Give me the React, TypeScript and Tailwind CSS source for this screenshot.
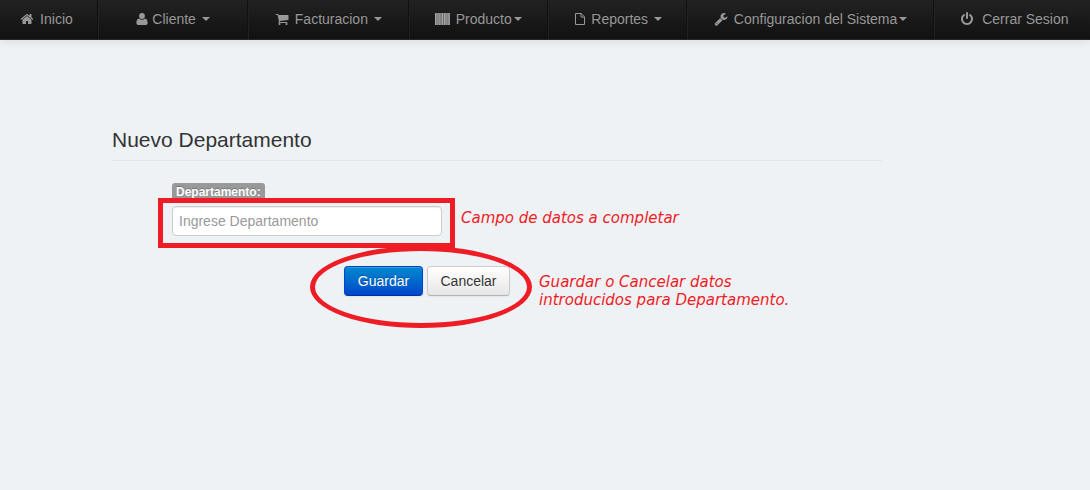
import type { ReactNode } from "react";

const paths = {
  home: "M1472 992v480q0 26-19 45t-45 19h-384v-384h-256v384h-384q-26 0-45-19t-19-45v-480q0-1 .5-3t.5-3l575-474 575 474q1 2 1 6zm223-69l-62 74q-8 9-21 11h-3q-13 0-21-7l-692-577-692 577q-12 8-24 7-13-2-21-11l-62-74q-8-10-7-23.5t11-21.5l719-599q32-26 76-26t76 26l244 204v-195q0-14 9-23t23-9h192q14 0 23 9t9 23v408l219 182q10 8 11 21.5t-7 23.5z",
  cart: "M704 1536q0 52-38 90t-90 38-90-38-38-90 38-90 90-38 90 38 38 90zm896 0q0 52-38 90t-90 38-90-38-38-90 38-90 90-38 90 38 38 90zm128-1088v512q0 24-16.5 42.5t-40.5 21.5l-1044 122q13 60 13 70 0 16-24 64h920q26 0 45 19t19 45-19 45-45 19h-1024q-26 0-45-19t-19-45q0-11 8-31.5t16-36 21.5-40 15.5-29.5l-177-823h-204q-26 0-45-19t-19-45 19-45 45-19h256q16 0 28.5 6.5t19.5 15.5 13 24.5 8 26 5.5 29.5 4.5 26h1201q26 0 45 19t19 45z",
  wrench: "M448 1472q0-26-19-45t-45-19-45 19-19 45 19 45 45 19 45-19 19-45zm644-420l-682 682q-37 37-90 37-52 0-91-37l-106-108q-38-36-38-90 0-53 38-91l681-681q39 98 114.5 173.5t173.5 114.5zm634-435q0 39-23 106-47 134-164.5 217.5t-258.5 83.5q-185 0-316.5-131.5t-131.5-316.5 131.5-316.5 316.5-131.5q58 0 121.5 16.5t107.5 46.5q16 11 16 28t-16 28l-293 169v224l193 107q5-3 79-48.5t135.5-81 70.5-35.5q15 0 23.5 10t8.5 25z",
  power: "M1664 896q0 156-61 298t-164 245-245 164-298 61-298-61-245-164-164-245-61-298q0-182 80.5-343t226.5-270q43-32 95.5-25t83.5 50q32 42 24.5 94.5t-49.5 84.5q-98 74-151.5 181t-53.5 228q0 104 40.5 198.5t109.5 163.5 163.5 109.5 198.5 40.5 198.5-40.5 163.5-109.5 109.5-163.5 40.5-198.5q0-121-53.5-228t-151.5-181q-42-32-49.5-84.5t24.5-94.5q31-43 84-50t95 25q146 109 226.5 270t80.5 343zm-640-768v640q0 52-38 90t-90 38-90-38-38-90v-640q0-52 38-90t90-38 90 38 38 90z",
};

function Glyph({ name }: { name: keyof typeof paths }) {
  return (
    <svg viewBox="0 0 1792 1792" className="size-[14px] shrink-0" fill="currentColor" aria-hidden="true">
      <path d={paths[name]} />
    </svg>
  );
}

function User() {
  return (
    <svg viewBox="0 0 12 12" className="size-3 shrink-0" fill="currentColor" aria-hidden="true">
      <ellipse cx="6" cy="3" rx="2.9" ry="3" />
      <path d="M3.1 5.5Q4.3 6.8 6 6.8t2.9-1.3c1.9.2 2.7 1.9 2.7 4.6 0 1.2-.7 1.9-1.8 1.9H2.2C1.1 12 .4 11.300.4 10.100c0-2.700.8-4.400 2.700-4.600z" />
    </svg>
  );
}

function Barcode() {
  return (
    <svg viewBox="0 0 15 12" className="h-3 w-[15px] shrink-0" aria-hidden="true">
      <rect width="15" height="12" fill="#6a6a6a" />
      <path
        fill="#a3a3a3"
        d="M0 0h1v12H0zM1.500 0h1v12h-1zM3.500 0h1.200v12H3.500zM5.600 0h.7v12h-.7zM7 0h1v12H7zM9 0h1.500v12H9zM11.400 0h1v12h-1zM13 0h.6v12H13zM14.200 0h.8v12h-.8z"
      />
    </svg>
  );
}

function FileOutline() {
  return (
    <svg viewBox="0 0 10 12" className="h-3 w-[10px] shrink-0" fill="none" stroke="currentColor" aria-hidden="true">
      <path d="M.5.5h5.700l3.300 3.300v7.700h-9zM6 .5v3.600h3.500" />
    </svg>
  );
}

type Item = { label: string; icon: ReactNode; size: string; gap: string; caret?: string };

const items: Item[] = [
  { label: "Inicio", icon: <Glyph name="home" />, size: "flex-[98_1_0%]", gap: "gap-[6px] pr-1" },
  { label: "Cliente", icon: <User />, size: "flex-[150_1_0%]", gap: "gap-[4px]", caret: "ml-[2px]" },
  { label: "Facturacion", icon: <Glyph name="cart" />, size: "flex-[160_1_0%]", gap: "gap-[6px]", caret: "" },
  { label: "Producto", icon: <Barcode />, size: "flex-[139_1_0%]", gap: "gap-[6px]", caret: "-ml-1" },
  { label: "Reportes", icon: <FileOutline />, size: "flex-[139_1_0%]", gap: "gap-[6px] pl-[2px]", caret: "" },
  { label: "Configuracion del Sistema", icon: <Glyph name="wrench" />, size: "flex-[247_1_0%]", gap: "gap-[6px]", caret: "-ml-1" },
  { label: "Cerrar Sesion", icon: <Glyph name="power" />, size: "flex-[157_1_0%]", gap: "gap-[8px] pl-1" },
];

function NavItem({ item }: { item: Item }) {
  return (
    <li className={`flex border-l border-l-[#222222] border-r border-r-[#111111] first:border-l-0 last:border-r-0 ${item.size}`}>
      <a
        href="#"
        className={`flex flex-1 items-center justify-center whitespace-nowrap pb-[2px] text-[14px] leading-5 text-[#999999] [text-shadow:0_-1px_0_rgba(0,0,0,0.25)] ${item.gap}`}
      >
        {item.icon}
        <span>{item.label}</span>
        {item.caret !== undefined && (
          <span className={`size-0 border-x-4 border-t-4 border-x-transparent border-t-[#999999] ${item.caret}`} />
        )}
      </a>
    </li>
  );
}

export default function App() {
  return (
    <div className="min-h-screen bg-[#eef2f5] font-['Liberation_Sans',Arial,sans-serif] text-[14px] leading-5 text-[#333333]">
      <nav className="border-b border-[#252525] bg-linear-to-b from-[#222222] to-[#111111] shadow-[0_1px_10px_rgba(0,0,0,0.1)]">
        <ul className="flex h-[39px]">
          {items.map((item) => (
            <NavItem key={item.label} item={item} />
          ))}
        </ul>
      </nav>

      <main className="ml-28 max-w-[770px] pt-20">
        <form onSubmit={(e) => e.preventDefault()}>
          <h1 className="border-b border-[#e5e5e5] text-[21px] leading-10">Nuevo Departamento</h1>

          <div className="pl-[60px] pt-[22px]">
            <label
              htmlFor="departamento"
              className="block w-fit rounded-[3px] bg-[#999999] px-1 py-px text-[12px] font-bold leading-4 text-white [text-shadow:0_-1px_0_rgba(0,0,0,0.25)]"
            >
              Departamento:
            </label>

            <div className="relative mt-[5px] w-[270px]">
              <input
                id="departamento"
                type="text"
                placeholder="Ingrese Departamento"
                className="block h-[30px] w-full rounded-[4px] border border-[#cccccc] bg-white px-[6px] text-[14px] leading-5 text-[#555555] shadow-[inset_0_1px_1px_rgba(0,0,0,0.075)] outline-none placeholder:text-[#999999]"
              />
              <div className="pointer-events-none absolute -bottom-3 -left-[14px] -right-[13px] -top-2 border-[5px] border-[#ee1c25]" />
              <p className="absolute left-[289px] top-[3px] whitespace-nowrap font-['DejaVu_Sans',sans-serif] text-[15px] italic leading-[18px] text-[#ee1c25]">
                Campo de datos a completar
              </p>
            </div>

            <div className="relative ml-[172px] mt-[30px] flex w-fit gap-1">
              <button
                type="submit"
                className="h-[30px] w-[79px] rounded-[4px] border border-[#0044cc] border-b-[#003399] bg-linear-to-b from-[#0088cc] to-[#0044cc] text-white shadow-[inset_0_1px_0_rgba(255,255,255,0.2),0_1px_2px_rgba(0,0,0,0.05)] [text-shadow:0_-1px_0_rgba(0,0,0,0.25)]"
              >
                Guardar
              </button>
              <button
                type="button"
                className="h-[30px] w-[83px] rounded-[4px] border border-[#cccccc] border-b-[#b3b3b3] bg-linear-to-b from-white to-[#e6e6e6] shadow-[inset_0_1px_0_rgba(255,255,255,0.2),0_1px_2px_rgba(0,0,0,0.05)] [text-shadow:0_1px_1px_rgba(255,255,255,0.75)]"
              >
                Cancelar
              </button>
              <div className="pointer-events-none absolute -left-[34px] -top-5 h-[82px] w-[222px] rounded-[50%] border-[5px] border-[#ee1c25]" />
              <p className="absolute left-[195px] top-[7px] whitespace-nowrap font-['DejaVu_Sans',sans-serif] text-[15px] italic leading-[18px] text-[#ee1c25]">
                Guardar o Cancelar datos
                <br />
                introducidos para Departamento.
              </p>
            </div>
          </div>
        </form>
      </main>
    </div>
  );
}
